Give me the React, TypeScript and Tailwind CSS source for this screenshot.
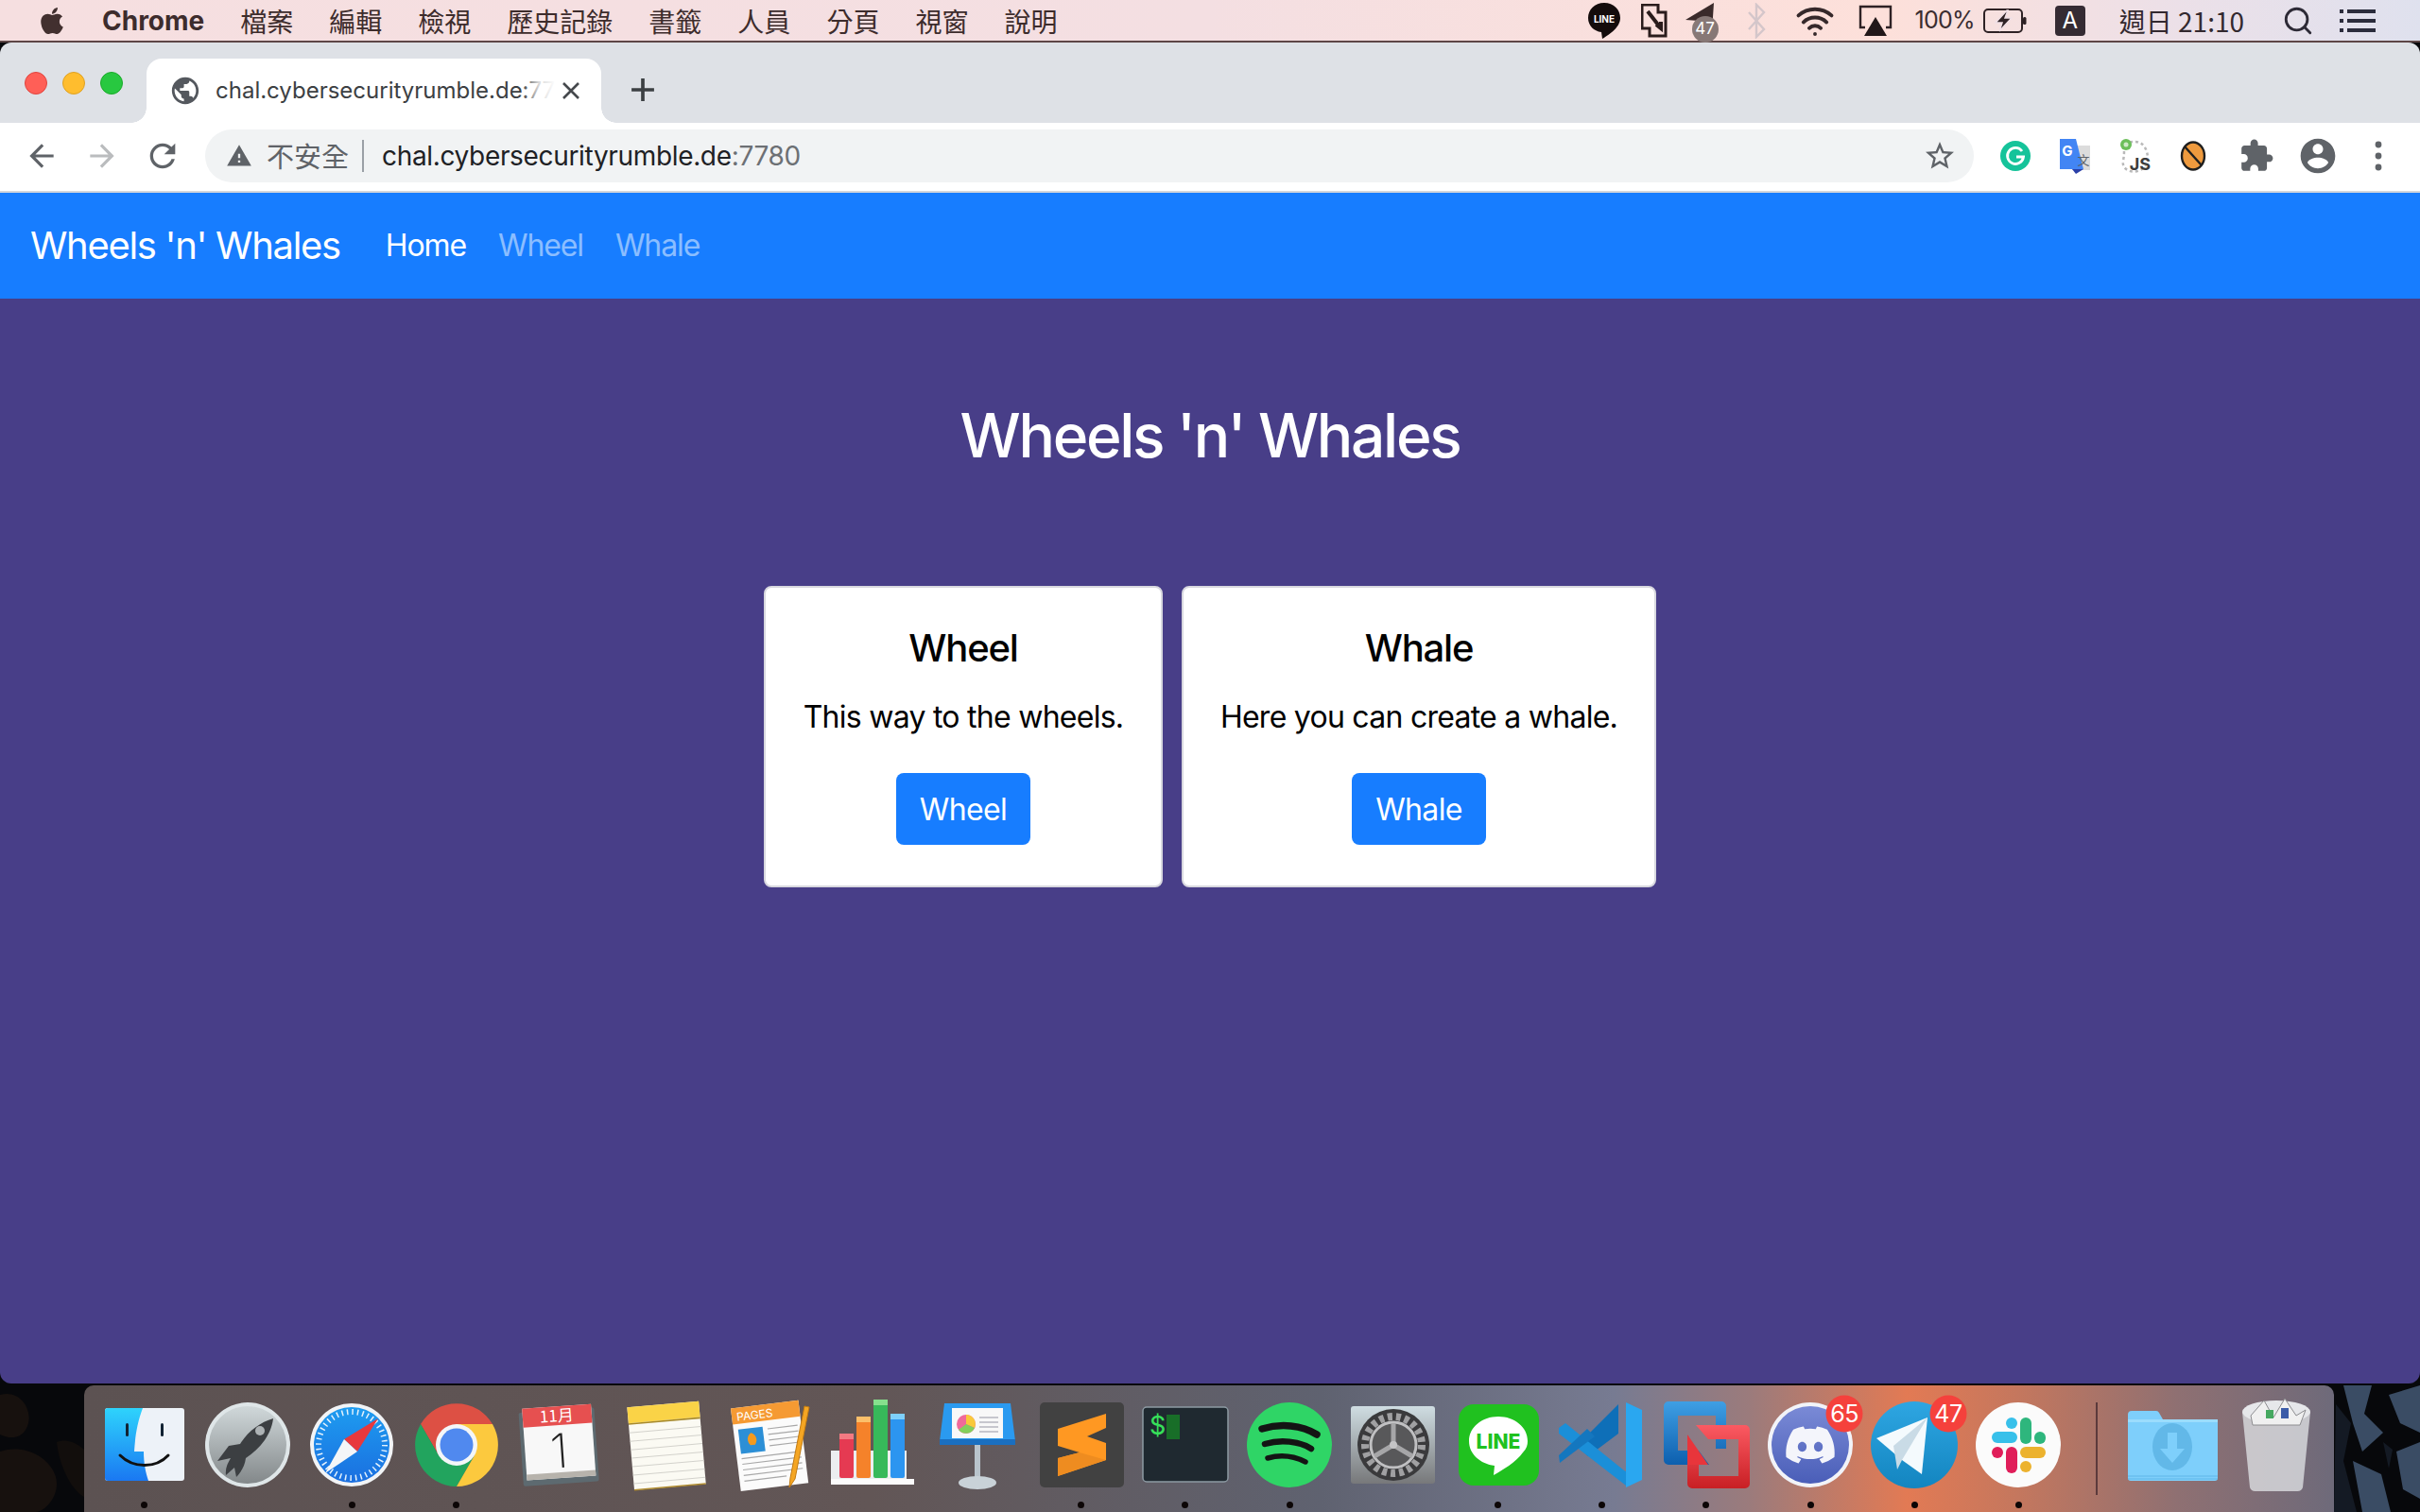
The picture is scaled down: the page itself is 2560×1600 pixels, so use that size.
import { FaApple, FaDiscord } from "react-icons/fa";
import { Search, Wifi } from "lucide-react";
import type { ReactNode } from "react";

const CJK = "'Noto Sans CJK TC', sans-serif";

const menuItems = ["檔案", "編輯", "檢視", "歷史記錄", "書籤", "人員", "分頁", "視窗", "說明"];

function MaterialIcon({ d, className }: { d: string; className?: string }) {
  return (
    <svg viewBox="0 0 24 24" className={className} fill="currentColor">
      <path d={d} />
    </svg>
  );
}

const paths = {
  back: "M20 11H7.83l5.59-5.59L12 4l-8 8 8 8 1.41-1.41L7.83 13H20v-2z",
  forward: "M12 4l-1.41 1.41L16.17 11H4v2h12.17l-5.58 5.59L12 20l8-8z",
  reload:
    "M17.65 6.35C16.2 4.9 14.21 4 12 4c-4.42 0-7.99 3.58-7.99 8s3.57 8 7.99 8c3.73 0 6.84-2.55 7.73-6h-2.08c-.82 2.33-3.04 4-5.65 4-3.31 0-6-2.69-6-6s2.69-6 6-6c1.66 0 3.14.69 4.22 1.78L13 11h7V4l-2.35 2.35z",
  star: "M22 9.24l-7.19-.62L12 2 9.19 8.63 2 9.24l5.46 4.73L5.82 21 12 17.27 18.18 21l-1.63-7.03L22 9.24zM12 15.4l-3.76 2.27 1-4.28-3.32-2.88 4.38-.38L12 6.1l1.71 4.04 4.38.38-3.32 2.88 1 4.28L12 15.4z",
  puzzle:
    "M20.5 11H19V7c0-1.1-.9-2-2-2h-4V3.5C13 2.12 11.88 1 10.5 1S8 2.12 8 3.5V5H4c-1.1 0-1.99.9-1.99 2v3.8H3.5c1.49 0 2.7 1.21 2.7 2.7s-1.21 2.7-2.7 2.7H2V20c0 1.1.9 2 2 2h3.8v-1.5c0-1.49 1.21-2.7 2.7-2.7 1.49 0 2.7 1.21 2.7 2.7V22H17c1.1 0 2-.9 2-2v-4h1.5c1.38 0 2.5-1.12 2.5-2.5S21.88 11 20.5 11z",
  account:
    "M12 2C6.48 2 2 6.48 2 12s4.48 10 10 10 10-4.48 10-10S17.52 2 12 2zm0 3c1.66 0 3 1.34 3 3s-1.34 3-3 3-3-1.34-3-3 1.34-3 3-3zm0 14.2c-2.5 0-4.71-1.28-6-3.22.03-1.99 4-3.08 6-3.08 1.99 0 5.97 1.09 6 3.08-1.29 1.94-3.5 3.22-6 3.22z",
  globe:
    "M12 2C6.48 2 2 6.48 2 12s4.48 10 10 10 10-4.48 10-10S17.52 2 12 2zm-1 17.93c-3.95-.49-7-3.85-7-7.93 0-.62.08-1.21.21-1.79L9 15v1c0 1.1.9 2 2 2v1.93zm6.9-2.54c-.26-.81-1-1.39-1.9-1.39h-1v-3c0-.55-.45-1-1-1H8v-2h2c.55 0 1-.45 1-1V7h2c1.1 0 2-.9 2-2v-.41c2.93 1.19 5 4.06 5 7.41 0 2.08-.8 3.97-2.1 5.39z",
  warning: "M1 21h22L12 2 1 21zm12-3h-2v-2h2v2zm0-4h-2v-4h2v4z",
};

function MenuBar() {
  return (
    <div className="flex h-[45px] shrink-0 items-center border-b-2 border-[#5d4646] bg-[linear-gradient(90deg,#f6dfe0_0%,#f4dfe2_50%,#fde0da_78%,#ece0e8_90%,#dfe1ee_100%)] text-[#3d2c2c] [font-family:'Noto_Sans_CJK_TC',sans-serif]">
      <FaApple className="ml-[40px] h-[32px] w-[30px] text-[#42302f]" />
      <span className="ml-[38px] text-[28px] font-bold [font-family:Inter,sans-serif]">Chrome</span>
      <div className="ml-[38px] flex gap-[38px] text-[28px] leading-none">
        {menuItems.map((item) => (
          <span key={item}>{item}</span>
        ))}
      </div>
      <div className="ml-auto flex items-center">
        {/* LINE */}
        <svg viewBox="0 0 36 40" className="h-[40px] w-[36px]">
          <path d="M18 1C8 1 1 8 1 17c0 8 6 14 14 15l1 7c5-3 19-11 19-22C35 8 28 1 18 1z" fill="#140c0c" />
          <text x="18" y="22" textAnchor="middle" fontSize="10" fontWeight="700" fill="#fff" fontFamily="Inter, sans-serif">LINE</text>
        </svg>
        {/* Parallels style double frame */}
        <svg viewBox="0 0 28 36" className="ml-[21px] h-[36px] w-[28px]">
          <path d="M1 1h17v8h8v25H9v-8H1z" fill="none" stroke="#2a1c1c" strokeWidth="3" />
          <path d="M7 8l14 18M16 22l5 4 0-7" fill="none" stroke="#2a1c1c" strokeWidth="4" />
        </svg>
        {/* Telegram */}
        <div className="relative ml-[19px] h-[42px] w-[36px]">
          <svg viewBox="0 0 36 42" className="h-[42px] w-[36px]">
            <path d="M0 20L30 2l-2 30-8-8-4 6-2-9z" fill="#3a2a2a" />
          </svg>
          <span className="absolute bottom-[-2px] right-[1px] flex h-[28px] w-[28px] items-center justify-center rounded-full bg-[#877876] text-[17px] text-white [font-family:Inter,sans-serif]">47</span>
        </div>
        {/* Bluetooth, greyed out */}
        <svg viewBox="0 0 22 38" className="ml-[28px] h-[38px] w-[22px]">
          <path d="M3 10l16 18-8 8V2l8 8L3 28" fill="none" stroke="#d4c6ca" strokeWidth="2.4" />
        </svg>
        <Wifi className="ml-[29px] h-[42px] w-[44px] text-[#35282a]" strokeWidth={2.2} />
        <svg viewBox="0 0 36 34" className="ml-[24px] h-[34px] w-[36px]">
          <path d="M7 24H2V2h32v22h-5" fill="none" stroke="#2e2225" strokeWidth="2.4" />
          <path d="M18 13l12 20H6z" fill="#221819" />
        </svg>
        <span className="ml-[24px] text-[25px] tracking-[-0.03em] text-[#3b2d30] [font-family:Inter,sans-serif]">100%</span>
        <svg viewBox="0 0 46 26" className="ml-[9px] h-[26px] w-[46px]">
          <rect x="1" y="1" width="40" height="24" rx="4" fill="none" stroke="#2e2225" strokeWidth="2" />
          <path d="M25 2L13 15h7l-3 9 13-14h-7l3-8z" fill="#2e2225" stroke="#f0e0e6" strokeWidth="1.5" />
          <rect x="42" y="9" width="3.5" height="8" rx="1.5" fill="#2e2225" />
        </svg>
        <span className="ml-[30px] flex h-[32px] w-[32px] items-center justify-center rounded-[4px] bg-[#352b33] text-[24px] text-white [font-family:Inter,sans-serif]">A</span>
        <span className="ml-[36px] text-[28px] text-[#33292f]">週日 21:10</span>
        <Search className="ml-[40px] h-[34px] w-[34px] text-[#2d2a36]" strokeWidth={2} />
        <svg viewBox="0 0 38 28" className="ml-[27px] mr-[47px] h-[28px] w-[38px]">
          <rect x="0" y="2" width="4" height="4" fill="#2b2c3c" />
          <rect x="8" y="2" width="30" height="4" fill="#2b2c3c" />
          <rect x="0" y="12" width="4" height="4" fill="#2b2c3c" />
          <rect x="8" y="12" width="30" height="4" fill="#2b2c3c" />
          <rect x="0" y="22" width="4" height="4" fill="#2b2c3c" />
          <rect x="8" y="22" width="30" height="4" fill="#2b2c3c" />
        </svg>
      </div>
    </div>
  );
}

function TabStrip() {
  return (
    <div className="flex h-[85px] shrink-0 items-end bg-[#dee1e6]">
      <div className="mb-[30px] ml-[26px] flex gap-[16px]">
        <span className="h-[24px] w-[24px] rounded-full border border-[#e0443e] bg-[#ff5f57]" />
        <span className="h-[24px] w-[24px] rounded-full border border-[#dea123] bg-[#ffbd2e]" />
        <span className="h-[24px] w-[24px] rounded-full border border-[#1aab29] bg-[#28c840]" />
      </div>
      <div className="relative ml-[25px] flex h-[68px] w-[481px] items-center rounded-t-[16px] bg-white">
        <span className="absolute bottom-0 left-[-16px] h-[16px] w-[16px] bg-[radial-gradient(circle_at_0_0,#dee1e6_15.5px,#ffffff_16px)]" />
        <span className="absolute bottom-0 right-[-16px] h-[16px] w-[16px] bg-[radial-gradient(circle_at_100%_0,#dee1e6_15.5px,#ffffff_16px)]" />
        <MaterialIcon d={paths.globe} className="ml-[24px] h-[34px] w-[34px] shrink-0 text-[#54585e]" />
        <div className="relative ml-[15px] w-[360px] whitespace-nowrap text-[24px] text-[#3c4043] [font-family:Inter,sans-serif]">
          chal.cybersecurityrumble.de:77
          <span className="absolute inset-y-0 right-0 w-[36px] bg-gradient-to-r from-transparent via-white/80 to-white" />
        </div>
        <svg viewBox="0 0 20 20" className="ml-[6px] h-[20px] w-[20px]">
          <path d="M2 2l16 16M18 2L2 18" stroke="#45484c" strokeWidth="2.6" />
        </svg>
      </div>
      <svg viewBox="0 0 24 24" className="mb-[22px] ml-[31px] h-[26px] w-[26px]">
        <path d="M12 1v22M1 12h22" stroke="#3c4043" strokeWidth="3.4" />
      </svg>
    </div>
  );
}

function Toolbar() {
  return (
    <div className="flex h-[74px] shrink-0 items-center border-b-2 border-[#d4d6da] bg-white pb-[2px]">
      <MaterialIcon d={paths.back} className="ml-[25px] h-[38px] w-[38px] text-[#5f6368]" />
      <MaterialIcon d={paths.forward} className="ml-[26px] h-[38px] w-[38px] text-[#babcbe]" />
      <MaterialIcon d={paths.reload} className="ml-[25px] h-[40px] w-[40px] text-[#5f6368]" />
      <div className="ml-[25px] flex h-[56px] w-[1871px] items-center rounded-full bg-[#f1f3f4]">
        <MaterialIcon d={paths.warning} className="ml-[22px] h-[28px] w-[28px] text-[#5f6368]" />
        <span className="ml-[15px] text-[29px] text-[#5f6368]" style={{ fontFamily: CJK }}>不安全</span>
        <span className="ml-[14px] h-[34px] w-[2px] bg-[#9aa0a6]" />
        <span className="ml-[19px] text-[28px] tracking-[-0.012em] text-[#202124] [font-family:Inter,sans-serif]">
          chal.cybersecurityrumble.de<span className="text-[#6c7074]">:7780</span>
        </span>
        <MaterialIcon d={paths.star} className="ml-auto mr-[18px] h-[36px] w-[36px] text-[#5f6368]" />
      </div>
      {/* Grammarly */}
      <svg viewBox="0 0 32 32" className="ml-[28px] h-[32px] w-[32px]">
        <circle cx="16" cy="16" r="16" fill="#15c39a" />
        <path d="M23 11a8.5 8.5 0 1 0 1.5 6H17" fill="none" stroke="#fff" strokeWidth="2.8" />
      </svg>
      {/* Translate */}
      <svg viewBox="0 0 34 38" className="ml-[30px] h-[38px] w-[34px]">
        <path d="M14 8h19v26H14z" fill="#dcdcdc" />
        <path d="M1 1h17l8 32H1z" fill="#4285f4" />
        <path d="M14 33h12l-8 5z" fill="#2a3fa8" />
        <text x="9" y="19" textAnchor="middle" fontSize="15" fontWeight="700" fill="#fff" fontFamily="Inter, sans-serif">G</text>
        <text x="26" y="28" textAnchor="middle" fontSize="13" fill="#5f6368" fontFamily="'Noto Sans CJK TC', sans-serif">文</text>
      </svg>
      {/* JS injector */}
      <svg viewBox="0 0 34 38" className="ml-[30px] h-[38px] w-[34px]">
        <path d="M6 8c6-6 18-6 22 4s2 18-6 22-20 0-18-10 0-14 2-16z" fill="none" stroke="#b9b9b9" strokeWidth="2.5" strokeDasharray="3 3" />
        <circle cx="7" cy="7" r="6" fill="#6cbf5a" />
        <circle cx="7" cy="7" r="2.5" fill="#cfe9c8" />
        <text x="22" y="34" textAnchor="middle" fontSize="18" fontWeight="700" fill="#3b3b3b" fontFamily="Inter, sans-serif">JS</text>
      </svg>
      {/* Blocked orange */}
      <svg viewBox="0 0 28 34" className="ml-[30px] h-[34px] w-[28px]">
        <ellipse cx="14" cy="17" rx="12" ry="14.5" fill="#ee9a3e" stroke="#1f1f1f" strokeWidth="2.4" />
        <path d="M5 7l18 20" stroke="#1f1f1f" strokeWidth="2.4" />
      </svg>
      <MaterialIcon d={paths.puzzle} className="ml-[34px] h-[38px] w-[38px] text-[#5f6368]" />
      <MaterialIcon d={paths.account} className="ml-[24px] h-[44px] w-[44px] text-[#5f6368]" />
      <svg viewBox="0 0 8 32" className="ml-[38px] h-[32px] w-[8px]">
        <circle cx="4" cy="4" r="3.4" fill="#5f6368" />
        <circle cx="4" cy="16" r="3.4" fill="#5f6368" />
        <circle cx="4" cy="28" r="3.4" fill="#5f6368" />
      </svg>
    </div>
  );
}

function Navbar() {
  return (
    <nav className="flex h-[112px] shrink-0 items-center bg-[#177dff] pl-[32px] text-white [font-family:Inter,sans-serif]">
      <span className="text-[40px] tracking-[-0.033em]">Wheels 'n' Whales</span>
      <div className="ml-[48px] flex gap-[34px] text-[32px] tracking-[-0.035em]">
        <span>Home</span>
        <span className="text-white/50">Wheel</span>
        <span className="text-white/50">Whale</span>
      </div>
    </nav>
  );
}

function Card({ title, text, button, width }: { title: string; text: string; button: string; width: string }) {
  return (
    <div className={`flex flex-col items-center rounded-[8px] border-2 border-[#d8d8df] bg-white pb-[43px] pt-[40px] ${width}`}>
      <h5 className="text-[40px] font-medium leading-[48px] tracking-[-0.03em] text-black">{title}</h5>
      <p className="mt-[25px] whitespace-nowrap text-[32px] leading-[48px] tracking-[-0.023em] text-black">{text}</p>
      <button className="mt-[35px] h-[76px] w-[142px] rounded-[8px] bg-[#177dff] pt-[1px] text-[32px] tracking-[-0.02em] text-white">{button}</button>
    </div>
  );
}

function Main() {
  return (
    <main className="flex flex-1 flex-col items-center bg-[#483e88] pt-[105px] [font-family:Inter,sans-serif]">
      <h1 className="text-[64px] font-medium leading-[80px] tracking-[-0.036em] text-white">Wheels 'n' Whales</h1>
      <div className="mt-[119px] flex gap-[20px]">
        <Card title="Wheel" text="This way to the wheels." button="Wheel" width="w-[422px]" />
        <Card title="Whale" text="Here you can create a whale." button="Whale" width="w-[502px]" />
      </div>
    </main>
  );
}

/* dock icons: every svg is 110x110, centred on its slot */

const Finder = (
  <>
    <defs>
      <linearGradient id="finderBlue" x1="0" y1="0" x2="0" y2="1">
        <stop offset="0" stopColor="#2ed3fc" />
        <stop offset="1" stopColor="#1a78f2" />
      </linearGradient>
    </defs>
    <rect x="14" y="16" width="84" height="77" rx="3" fill="#edf2f8" />
    <path d="M17 16h37c-6 16-8 30-9 46h10c0 12 2 22 5 31H17a3 3 0 0 1-3-3V19a3 3 0 0 1 3-3z" fill="url(#finderBlue)" />
    <rect x="36" y="32" width="3" height="14" rx="1.5" fill="#123" />
    <rect x="73" y="32" width="3" height="14" rx="1.5" fill="#123" />
    <path d="M30 66c14 14 38 14 51 0" fill="none" stroke="#111" strokeWidth="3" strokeLinecap="round" />
  </>
);

const Launchpad = (
  <>
    <defs>
      <linearGradient id="padGrad" x1="0" y1="0" x2="0" y2="1">
        <stop offset="0" stopColor="#d0d8da" />
        <stop offset="1" stopColor="#83888a" />
      </linearGradient>
    </defs>
    <circle cx="55" cy="55" r="45" fill="#dfe6e8" />
    <circle cx="55" cy="55" r="41" fill="url(#padGrad)" />
    <path d="M82 27c-14 4-27 14-35 27l-12 2-12 16 14-3c-3 5-6 11-5 18l9-8 2 10c5-5 9-12 10-20 14-9 27-24 29-42z" fill="#3c3f42" />
    <circle cx="68" cy="40" r="5" fill="#aeb3b5" />
  </>
);

const Safari = (
  <>
    <defs>
      <linearGradient id="safariGrad" x1="0" y1="0" x2="0" y2="1">
        <stop offset="0" stopColor="#1e9cf0" />
        <stop offset="1" stopColor="#1a6fe0" />
      </linearGradient>
    </defs>
    <circle cx="55" cy="55" r="44" fill="#f2f4f6" />
    <circle cx="55" cy="55" r="40" fill="url(#safariGrad)" />
    <circle cx="55" cy="55" r="35" fill="none" stroke="#e4f2fd" strokeWidth="6" strokeDasharray="1.5 4" />
    <path d="M83 27L47 49l14 13z" fill="#e8383d" />
    <path d="M27 85l20-36 14 13z" fill="#f4f6f8" />
  </>
);

const Chrome = (
  <>
    <path d="M93 33H55L36 66 17 33a44 44 0 0 1 76 0z" fill="#dd5044" />
    <path d="M17 33l19 33h38L55 99a44 44 0 0 1-38-66z" fill="#22a45e" />
    <path d="M93 33H55l19 33-19 33a44 44 0 0 0 38-66z" fill="#fcc93e" />
    <circle cx="55" cy="55" r="22" fill="#f4f6f8" />
    <circle cx="55" cy="55" r="17.5" fill="#5089ef" />
  </>
);

const Calendar = (
  <g transform="rotate(-4 55 55)">
    <rect x="13" y="18" width="80" height="78" rx="2" fill="#5d6a70" />
    <rect x="17" y="14" width="73" height="76" fill="#f8f8f8" />
    <rect x="17" y="14" width="73" height="20" fill="#e65050" />
    <rect x="17" y="84" width="73" height="6" fill="#b7b3ac" />
    <text x="53" y="30" textAnchor="middle" fontSize="17" fill="#fff" fontFamily="'Noto Sans CJK TC', sans-serif">11月</text>
    <text x="53" y="79" textAnchor="middle" fontSize="50" fontWeight="200" fill="#222" fontFamily="Inter, sans-serif">1</text>
  </g>
);

const Notes = (
  <g transform="rotate(-5 55 55) translate(3 0)">
    <rect x="16" y="12" width="76" height="88" fill="#fbfaf3" />
    <rect x="16" y="12" width="76" height="17" fill="#fad347" />
    <rect x="16" y="29" width="76" height="1.6" fill="#a88a2a" />
    <path d="M16 39h76M16 48h76M16 57h76M16 66h76M16 75h76M16 84h76M16 93h76" stroke="#d3d2cc" strokeWidth="1" />
    <rect x="16" y="99" width="76" height="1.5" fill="#b08c30" />
  </g>
);

const Pages = (
  <>
    <g transform="rotate(-7 55 55) translate(4 0)">
      <rect x="16" y="12" width="72" height="88" fill="#fbfbfb" />
      <rect x="16" y="12" width="72" height="17" fill="#f59a33" />
      <text x="21" y="26" fontSize="12" fill="#fff" fontFamily="Inter, sans-serif">PAGES</text>
      <rect x="21" y="35" width="26" height="26" fill="#2c8fd6" />
      <path d="M34 40c5 2 7 8 3 13h-5c-4-5-2-11 2-13z" fill="#f39a1e" />
      <path d="M52 38h32M52 44h32M52 50h32M52 56h32M21 66h63M21 72h63M21 78h63M21 84h63M21 90h45" stroke="#a8a8a8" strokeWidth="1.2" />
    </g>
    <path d="M98 15l-5-1-15 76-1 10 6-9z" fill="#f5a623" stroke="#c17a12" strokeWidth="1" />
  </>
);

const Numbers = (
  <>
    <rect x="11" y="61" width="80" height="35" fill="#eceef0" />
    <rect x="11" y="91" width="88" height="6" fill="#fbfbfb" />
    <rect x="20" y="43" width="15" height="47" rx="2" fill="#e53a52" />
    <rect x="20" y="43" width="15" height="6" fill="#f37a82" />
    <rect x="38" y="25" width="15" height="65" rx="2" fill="#f5822a" />
    <rect x="38" y="25" width="15" height="6" fill="#fbbf6a" />
    <rect x="56" y="7" width="15" height="83" rx="2" fill="#37b95a" />
    <rect x="56" y="7" width="15" height="6" fill="#86e08d" />
    <rect x="74" y="22" width="15" height="68" rx="2" fill="#2c95f0" />
    <rect x="74" y="22" width="15" height="6" fill="#7ed0fb" />
  </>
);

const Keynote = (
  <>
    <path d="M20 11h70l5 40H15z" fill="#2a9af0" />
    <rect x="15" y="49" width="80" height="6" fill="#1a6fc0" />
    <rect x="28" y="16" width="54" height="32" fill="#f8f8f8" />
    <circle cx="43" cy="33" r="10" fill="#f06a9a" />
    <path d="M43 33V23a10 10 0 0 1 9 14z" fill="#f9c93a" />
    <path d="M43 33l9 4a10 10 0 0 1-17 2z" fill="#84d05a" />
    <path d="M57 26h20M57 31h20M57 36h20M57 41h20" stroke="#b7b7c0" strokeWidth="1.3" />
    <rect x="52" y="55" width="6" height="36" fill="#b9c4cc" />
    <ellipse cx="55" cy="95" rx="20" ry="7" fill="#c9d2d8" />
  </>
);

const Sublime = (
  <>
    <rect x="11" y="10" width="89" height="90" rx="5" fill="#414141" />
    <path d="M81 22v15l-20 9 20 7v18L30 88V69l23-6-23-7V38z" fill="#ff9822" />
    <path d="M53 63l28 8-51 17V69z" fill="#ee8c20" />
  </>
);

const Terminal = (
  <>
    <rect x="10" y="15" width="90" height="79" rx="4" fill="#1f2930" stroke="#8d9aa3" strokeWidth="1.5" />
    <text x="17" y="44" fontSize="27" fill="#37e05a" fontFamily="Inter, sans-serif">$</text>
    <rect x="35" y="23" width="14" height="26" fill="#186e28" />
  </>
);

const Spotify = (
  <>
    <circle cx="55" cy="55" r="45" fill="#2fd566" />
    <path d="M26 38c20-6 42-4 58 6" fill="none" stroke="#141414" strokeWidth="7.5" strokeLinecap="round" />
    <path d="M29 54c17-5 36-3 49 5" fill="none" stroke="#141414" strokeWidth="6.5" strokeLinecap="round" />
    <path d="M32 69c14-4 28-2 40 4" fill="none" stroke="#141414" strokeWidth="5.5" strokeLinecap="round" />
  </>
);

const SysPrefs = (
  <>
    <defs>
      <linearGradient id="prefBg" x1="0" y1="0" x2="0" y2="1">
        <stop offset="0" stopColor="#cfdde2" />
        <stop offset="1" stopColor="#77787a" />
      </linearGradient>
    </defs>
    <rect x="10" y="14" width="89" height="82" rx="3" fill="url(#prefBg)" />
    <circle cx="55" cy="55" r="38" fill="#3a3a3c" />
    <circle cx="55" cy="55" r="30" fill="none" stroke="#a0a0a2" strokeWidth="8" strokeDasharray="5 4" />
    <circle cx="55" cy="55" r="24" fill="#58585a" stroke="#c0c0c2" strokeWidth="3" />
    <path d="M55 55V32M55 55L35 67M55 55l20 12" stroke="#a6a6a8" strokeWidth="5" />
    <circle cx="55" cy="55" r="4" fill="#c4c4c6" />
  </>
);

const Line = (
  <>
    <rect x="13" y="12" width="85" height="86" rx="16" fill="#20c11f" />
    <path d="M55 25c-17 0-31 11-31 26 0 14 12 24 27 26l-1 10c9-5 24-14 31-24 4-4 5-8 5-12 0-15-14-26-31-26z" fill="#fff" />
    <text x="55" y="59" textAnchor="middle" fontSize="21" fontWeight="800" fill="#20c11f" fontFamily="Inter, sans-serif">LINE</text>
  </>
);

const VSCode = (
  <>
    <path d="M72 12l-44 44 12 11 32-24z" fill="#0e6fb8" />
    <path d="M9 37l7-5 62 50 16 8-14 8L9 43z" fill="#1b8fd8" />
    <path d="M80 10l17 8v74l-17 8z" fill="#2aa7f0" />
    <path d="M9 66l30-28 8 8-37 28z" fill="#1477bf" />
  </>
);

const VMware = (
  <>
    <defs>
      <linearGradient id="vmBlue" x1="0" y1="0" x2="0" y2="1">
        <stop offset="0" stopColor="#3f9fe4" />
        <stop offset="1" stopColor="#0d5fae" />
      </linearGradient>
      <linearGradient id="vmRed" x1="0" y1="0" x2="0" y2="1">
        <stop offset="0" stopColor="#fb5a62" />
        <stop offset="1" stopColor="#c81f24" />
      </linearGradient>
    </defs>
    <path d="M15 9h56a5 5 0 0 1 5 5v45H65V24H25v37h22l11 15H15a5 5 0 0 1-5-5V14a5 5 0 0 1 5-5z" fill="url(#vmBlue)" />
    <path d="M44 34h52a5 5 0 0 1 5 5v57a5 5 0 0 1-5 5H40a5 5 0 0 1-5-5V76h12v12h42V49H57z" fill="url(#vmRed)" />
    <path d="M35 44l22 32H35z" fill="#e8353b" />
  </>
);

function Badge({ label }: { label: string }) {
  return (
    <g>
      <circle cx="91" cy="22" r="19.5" fill="#f5413c" />
      <text x="91" y="31" textAnchor="middle" fontSize="25" letterSpacing="-0.5" fill="#fff" fontFamily="Inter, sans-serif">{label}</text>
    </g>
  );
}

const Discord = (
  <>
    <circle cx="55" cy="55" r="45" fill="#f2f3f8" />
    <defs>
      <linearGradient id="discordBg" x1="0" y1="0" x2="0" y2="1">
        <stop offset="0" stopColor="#7a8ad6" />
        <stop offset="1" stopColor="#4a5eb8" />
      </linearGradient>
    </defs>
    <circle cx="55" cy="55" r="41" fill="url(#discordBg)" />
  </>
);

const Telegram = (
  <>
    <defs>
      <linearGradient id="tgBg" x1="0" y1="0" x2="0" y2="1">
        <stop offset="0" stopColor="#2ea6e2" />
        <stop offset="1" stopColor="#1385c0" />
      </linearGradient>
    </defs>
    <circle cx="55" cy="55" r="46" fill="url(#tgBg)" />
    <path d="M15 48l54-22-6 60-21-15z" fill="#f4fafd" />
    <path d="M33 56l36-30-27 45-5 10z" fill="#c9dbe6" />
    <Badge label="47" />
  </>
);

const Slack = (
  <>
    <circle cx="55" cy="55" r="45" fill="#fbfbfb" />
    <rect x="27" y="41" width="27" height="12" rx="6" fill="#38c0ea" />
    <rect x="42" y="26" width="12" height="12" rx="6" fill="#38c0ea" />
    <rect x="57" y="26" width="12" height="28" rx="6" fill="#2eb67d" />
    <rect x="72" y="41" width="12" height="13" rx="6" fill="#2eb67d" />
    <rect x="57" y="57" width="27" height="12" rx="6" fill="#ecb22e" />
    <rect x="57" y="72" width="12" height="12" rx="6" fill="#ecb22e" />
    <rect x="42" y="57" width="12" height="28" rx="6" fill="#e01e5a" />
    <rect x="27" y="57" width="12" height="12" rx="6" fill="#e01e5a" />
  </>
);

const Folder = (
  <>
    <path d="M8 23a4 4 0 0 1 4-4h26a4 4 0 0 1 3 2l4 7h55a3 3 0 0 1 3 3v59a3 3 0 0 1-3 3H11a3 3 0 0 1-3-3z" fill="#7ecffb" />
    <rect x="8" y="28" width="95" height="3" fill="#9bdcfd" />
    <path d="M8 88h95M8 91h95" stroke="#5fb6e8" strokeWidth="1" />
    <ellipse cx="55" cy="57" rx="21" ry="25" fill="#62b8e8" />
    <path d="M50 42h10v17h8L55 74 42 59h8z" fill="#7ecffb" />
  </>
);

const Trash = (
  <>
    <path d="M19 20h72l-8 80a6 6 0 0 1-6 4H33a6 6 0 0 1-6-4z" fill="#d6d7da" opacity="0.85" />
    <ellipse cx="55" cy="20" rx="36" ry="12" fill="#e6e7ea" />
    <path d="M28 24l14-16 10 18 12-20 12 18 10-6-6 16H30z" fill="#f0f0f0" stroke="#8d8d90" strokeWidth="1" />
    <rect x="44" y="18" width="8" height="9" fill="#45a860" />
    <rect x="60" y="16" width="8" height="11" fill="#3c5ca8" />
  </>
);

const apps: { icon: ReactNode; running?: boolean; overlay?: ReactNode }[] = [
  { icon: Finder, running: true },
  { icon: Launchpad },
  { icon: Safari, running: true },
  { icon: Chrome, running: true },
  { icon: Calendar },
  { icon: Notes },
  { icon: Pages },
  { icon: Numbers },
  { icon: Keynote },
  { icon: Sublime, running: true },
  { icon: Terminal, running: true },
  { icon: Spotify, running: true },
  { icon: SysPrefs },
  { icon: Line, running: true },
  { icon: VSCode, running: true },
  { icon: VMware, running: true },
  {
    icon: Discord,
    running: true,
    overlay: (
      <>
        <FaDiscord className="absolute left-[27px] top-[35px] h-[56px] w-[56px] text-[#f4f5fb]" />
        <svg viewBox="0 0 110 110" className="absolute left-0 top-[8px] h-[110px] w-[110px] overflow-visible">
          <Badge label="65" />
        </svg>
      </>
    ),
  },
  { icon: Telegram, running: true },
  { icon: Slack, running: true },
];

function DockSlot({ icon, running, overlay }: { icon: ReactNode; running?: boolean; overlay?: ReactNode }) {
  return (
    <div className="relative flex w-[110.2px] shrink-0 flex-col items-center">
      <svg viewBox="0 0 110 110" className="mt-[8px] h-[110px] w-[110px] overflow-visible">
        {icon}
      </svg>
      {overlay}
      {running && <span className="mt-[5px] h-[7px] w-[7px] rounded-full bg-[#0c0606]" />}
    </div>
  );
}

function Dock() {
  return (
    <div className="mt-[2px] flex h-[134px] shrink-0">
      <svg viewBox="0 0 89 134" className="h-[134px] w-[89px] shrink-0">
        <path d="M0 10c20-6 34 14 30 30S12 58 0 52zM0 70c24-8 50 4 58 24s-10 40-20 40H0z" fill="#17110e" />
        <path d="M60 60c10-4 20 0 29 8v50c-12-6-26-30-29-58z" fill="#120e0c" />
      </svg>
      <div className="flex flex-1 rounded-t-[10px] bg-[linear-gradient(90deg,#5c5252_0%,#625656_35%,#5f6270_55%,#777b92_68%,#9b7b7c_74%,#e27a54_81%,#c4775e_86%,#8f7072_93%,#6e6a7a_100%)] pl-[8px]">
        {apps.map((app, i) => (
          <DockSlot key={i} {...app} />
        ))}
        <span className="ml-[26px] mt-[18px] h-[98px] w-[2px] bg-[#5c3a3c]" />
        <div className="ml-[24px] flex">
          <DockSlot icon={Folder} />
          <DockSlot icon={Trash} />
        </div>
      </div>
      <svg viewBox="0 0 91 134" className="h-[134px] w-[91px] shrink-0">
        <path d="M10 0h30l-8 30 20 20-22 20-10-30zM58 10l33-10v50L70 40zM20 80l30 14 10 40H30zM66 70l25-10v60l-18-10z" fill="#3a4c64" />
        <path d="M2 20l16 20-8 40 14 54H0zM52 60l10 8-4 20z" fill="#141a24" />
      </svg>
    </div>
  );
}

export default function App() {
  return (
    <div className="flex h-[1600px] w-[2560px] flex-col overflow-hidden bg-[#07080b]">
      <MenuBar />
      <div className="flex h-[1419px] shrink-0 flex-col overflow-hidden rounded-[12px]">
        <TabStrip />
        <Toolbar />
        <Navbar />
        <Main />
      </div>
      <Dock />
    </div>
  );
}
